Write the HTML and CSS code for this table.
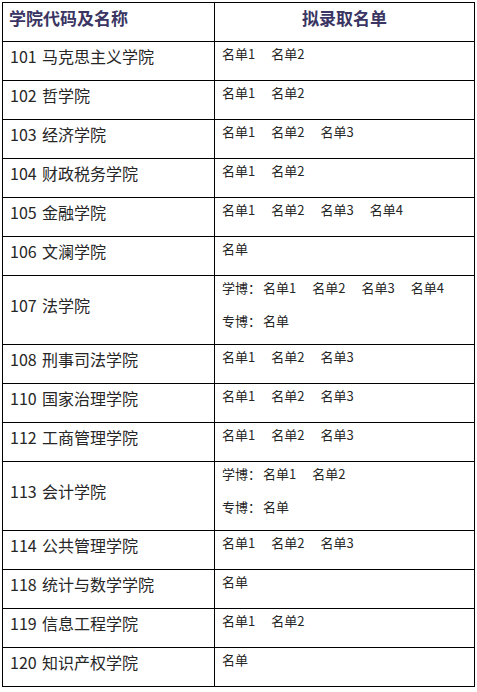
FILE: index.html
```html
<!DOCTYPE html>
<html lang="zh-CN">
<head>
<meta charset="utf-8">
<title>拟录取名单</title>
<link rel="stylesheet" href="styles.css">
</head>
<body>
<div class="page">
<table class="list">
  <thead>
    <tr>
      <th class="col-name">学院代码及名称</th>
      <th class="col-list">拟录取名单</th>
    </tr>
  </thead>
  <tbody>
    <tr><td class="name"><span class="code">101</span>马克思主义学院</td><td class="names"><div class="line"><span>名单1</span><span>名单2</span></div></td></tr>
    <tr><td class="name"><span class="code">102</span>哲学院</td><td class="names"><div class="line"><span>名单1</span><span>名单2</span></div></td></tr>
    <tr><td class="name"><span class="code">103</span>经济学院</td><td class="names"><div class="line"><span>名单1</span><span>名单2</span><span>名单3</span></div></td></tr>
    <tr><td class="name"><span class="code">104</span>财政税务学院</td><td class="names"><div class="line"><span>名单1</span><span>名单2</span></div></td></tr>
    <tr><td class="name"><span class="code">105</span>金融学院</td><td class="names"><div class="line"><span>名单1</span><span>名单2</span><span>名单3</span><span>名单4</span></div></td></tr>
    <tr><td class="name"><span class="code">106</span>文澜学院</td><td class="names"><div class="line"><span>名单</span></div></td></tr>
    <tr class="tall"><td class="name"><span class="code">107</span>法学院</td><td class="names"><div class="line"><span class="label">学博：</span><span>名单1</span><span>名单2</span><span>名单3</span><span>名单4</span></div><div class="line second"><span class="label">专博：</span><span>名单</span></div></td></tr>
    <tr><td class="name"><span class="code">108</span>刑事司法学院</td><td class="names"><div class="line"><span>名单1</span><span>名单2</span><span>名单3</span></div></td></tr>
    <tr><td class="name"><span class="code">110</span>国家治理学院</td><td class="names"><div class="line"><span>名单1</span><span>名单2</span><span>名单3</span></div></td></tr>
    <tr><td class="name"><span class="code">112</span>工商管理学院</td><td class="names"><div class="line"><span>名单1</span><span>名单2</span><span>名单3</span></div></td></tr>
    <tr class="tall"><td class="name"><span class="code">113</span>会计学院</td><td class="names"><div class="line"><span class="label">学博：</span><span>名单1</span><span>名单2</span></div><div class="line second"><span class="label">专博：</span><span>名单</span></div></td></tr>
    <tr><td class="name"><span class="code">114</span>公共管理学院</td><td class="names"><div class="line"><span>名单1</span><span>名单2</span><span>名单3</span></div></td></tr>
    <tr><td class="name"><span class="code">118</span>统计与数学学院</td><td class="names"><div class="line"><span>名单</span></div></td></tr>
    <tr><td class="name"><span class="code">119</span>信息工程学院</td><td class="names"><div class="line"><span>名单1</span><span>名单2</span></div></td></tr>
    <tr><td class="name"><span class="code">120</span>知识产权学院</td><td class="names"><div class="line"><span>名单</span></div></td></tr>
  </tbody>
</table>
</div>
</body>
</html>
```

FILE: styles.css
```css
html, body {
  margin: 0;
  padding: 0;
  background: #ffffff;
}

.page {
  padding: 2px 0 0 2px;
  font-family: "Noto Sans CJK SC", "DejaVu Sans", sans-serif;
  color: #262626;
}

.list {
  border-collapse: collapse;
  table-layout: fixed;
  width: 473px;
  border: 1px solid #000;
}

.list th,
.list td {
  border: 1px solid #000;
  padding: 0;
}

.list th {
  height: 39px;
  box-sizing: border-box;
  font-size: 17px;
  line-height: 22px;
  font-weight: 700;
  color: #3a3562;
  vertical-align: middle;
  padding-bottom: 8px;
}

.list th.col-name {
  width: 212px;
  text-align: left;
  padding-left: 6px;
}

.list th.col-list {
  text-align: center;
}

.list td {
  height: 39px;
  box-sizing: border-box;
}

.list tr.tall td {
  height: 69px;
}

.list td.name {
  font-size: 16px;
  line-height: 20px;
  vertical-align: middle;
  padding: 0 0 10px 7px;
  white-space: nowrap;
  font-weight: 400;
}

.code {
  display: inline-block;
  width: 32px;
}

.list td.names {
  vertical-align: top;
  padding: 2px 0 0 7px;
  font-size: 13px;
  line-height: 20px;
}

.line {
  display: flex;
  white-space: nowrap;
}

.line span {
  margin-right: 16px;
}

.line .label {
  margin-right: 2px;
}

.line.second {
  margin-top: 13px;
}
```
